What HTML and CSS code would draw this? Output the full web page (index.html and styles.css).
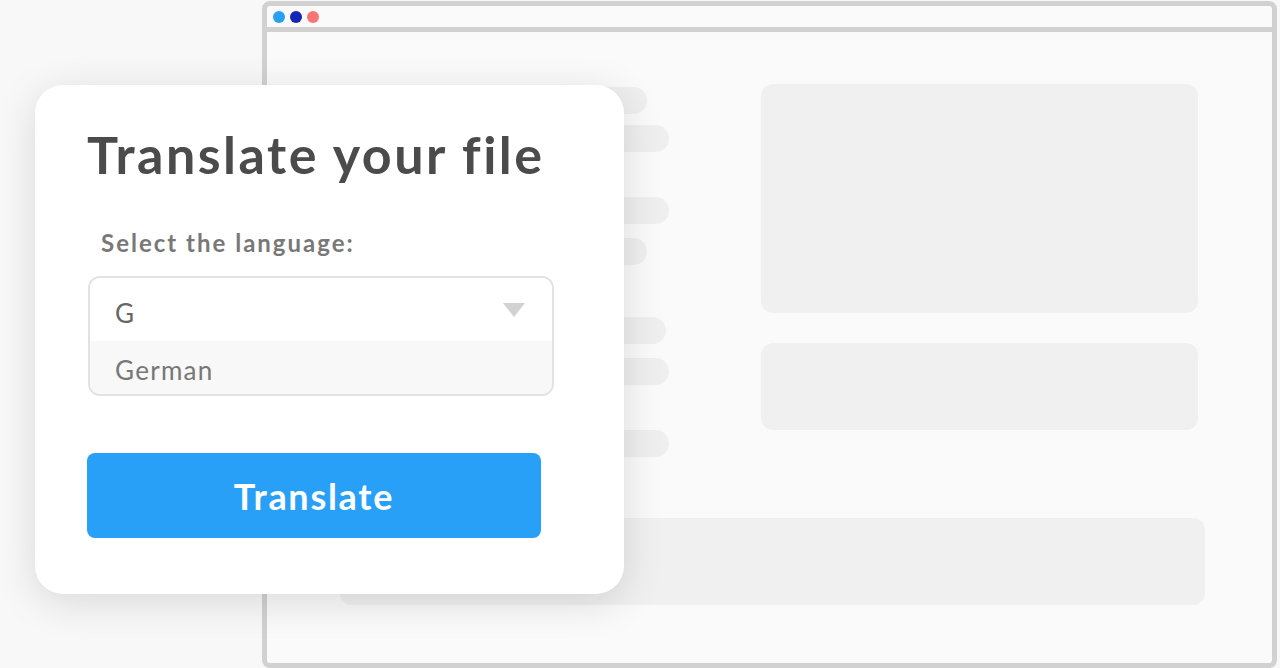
FILE: index.html
```html
<!DOCTYPE html>
<html>
<head>
    <meta name="viewport" content="width=device-width, initial-scale=1, shrink-to-fit=no">
    <title>Translate your file</title>
    <link rel="stylesheet" href="styles.css">
</head>
<body>
    <main class="scene">
        <section class="browser">
            <div class="titlebar">
                <span class="dot dot-blue"></span>
                <span class="dot dot-navy"></span>
                <span class="dot dot-red"></span>
            </div>
            <div class="page">
                <div class="lines">
                    <div class="pill short"></div>
                    <div class="pill"></div>
                    <div class="pill gap-lg"></div>
                    <div class="pill short gap-sm"></div>
                    <div class="pill mid gap-xl"></div>
                    <div class="pill gap-sm"></div>
                    <div class="pill gap-lg"></div>
                </div>
                <div class="boxes">
                    <div class="box tall"></div>
                    <div class="box"></div>
                </div>
                <div class="footer-bar"></div>
            </div>
        </section>

        <section class="card">
            <h1 class="card-title">Translate your file</h1>
            <label class="field-label" for="language">Select the language:</label>
            <div class="select" id="language">
                <div class="select-input">
                    <span>G</span>
                    <svg class="caret" width="22" height="14" viewBox="0 0 22 14"><path d="M0 0 H22 L11 14 Z" fill="#d2d2d2"/></svg>
                </div>
                <div class="select-option">German</div>
            </div>
            <button class="btn-translate">Translate</button>
        </section>
    </main>
</body>
</html>
```

FILE: styles.css
```css
:root {
    font-family: Lato, "Open Sans", sans-serif;
}
html, body {
    margin: 0;
    height: 100%;
    background: #f8f8f8;
}

.scene {
    position: relative;
    width: 1280px;
    height: 668px;
    overflow: hidden;
}

/* browser mockup */
.browser {
    box-sizing: border-box;
    margin: 1px 0 0 262px;
    width: 1015px;
    height: 667px;
    border: 5px solid #d1d1d1;
    border-radius: 8px;
    background: #fafafa;
    display: flex;
    flex-direction: column;
}

.titlebar {
    height: 21px;
    border-bottom: 5px solid #d1d1d1;
    display: flex;
    align-items: center;
    gap: 5px;
    padding-left: 6px;
}

.dot {
    width: 12px;
    height: 12px;
    border-radius: 50%;
}
.dot-blue { background: #2a9ff6; }
.dot-navy { background: #1428b4; }
.dot-red  { background: #fb7575; }

.page {
    flex: 1;
    display: grid;
    grid-template-columns: 329px 437px;
    grid-template-rows: auto 1fr;
    column-gap: 92px;
    padding: 52px 0 0 73px;
}

.lines {
    display: flex;
    flex-direction: column;
    padding-top: 3px;
}

.pill {
    width: 329px;
    height: 27px;
    margin-top: 11px;
    border-radius: 14px;
    background: #efefef;
}
.pill:first-child { margin-top: 0; }
.pill.short { width: 307px; }
.pill.mid { width: 326px; }
.pill.gap-sm { margin-top: 14px; }
.pill.gap-lg { margin-top: 45px; }
.pill.gap-xl { margin-top: 52px; }

.boxes {
    display: flex;
    flex-direction: column;
    gap: 30px;
}

.box {
    height: 87px;
    border-radius: 12px;
    background: #f0f0f0;
}
.box.tall { height: 229px; }

.footer-bar {
    grid-column: 1 / 3;
    width: 865px;
    height: 87px;
    margin-top: 61px;
    border-radius: 12px;
    background: #f0f0f0;
}

/* floating dialog */
.card {
    position: absolute;
    left: 35px;
    top: 85px;
    box-sizing: border-box;
    width: 589px;
    height: 509px;
    padding: 38px 0 0 52px;
    border-radius: 28px;
    background: #fff;
    box-shadow: 0 8px 40px rgba(0, 0, 0, 0.13);
}

.card-title {
    margin: 0;
    font-size: 52px;
    font-weight: 700;
    line-height: 62px;
    letter-spacing: 2.5px;
    color: #4b4b4b;
}

.field-label {
    display: block;
    margin: 43px 0 0 14px;
    font-size: 24px;
    font-weight: 700;
    line-height: 30px;
    letter-spacing: 2px;
    color: #787878;
}

.select {
    box-sizing: border-box;
    width: 466px;
    margin: 18px 0 0 1px;
    border: 2px solid #e2e2e2;
    border-radius: 12px;
    overflow: hidden;
}

.select-input {
    box-sizing: border-box;
    height: 63px;
    display: flex;
    align-items: center;
    justify-content: space-between;
    padding: 6px 27px 0 25px;
    font-size: 26px;
    color: #666;
    background: #fff;
}

.caret {
    margin-top: -5px;
}

.select-option {
    box-sizing: border-box;
    height: 53px;
    display: flex;
    align-items: center;
    padding: 4px 0 0 25px;
    font-size: 26px;
    letter-spacing: 1.3px;
    color: #777;
    background: #f8f8f8;
}

.btn-translate {
    display: block;
    width: 454px;
    height: 85px;
    margin-top: 57px;
    border: 0;
    border-radius: 8px;
    background: #29a0f8;
    color: #fff;
    font-family: inherit;
    font-size: 36px;
    font-weight: 700;
    letter-spacing: 1.7px;
}
```
